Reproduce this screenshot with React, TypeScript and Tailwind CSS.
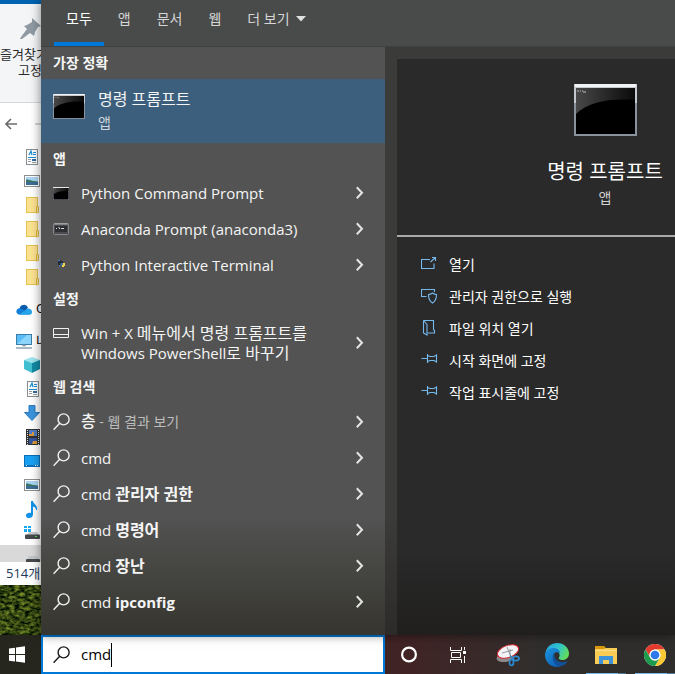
import React, { useState } from "react";

type Result = {
  label: React.ReactNode;
  icon: React.ReactNode;
  rowClass?: string;
};

const fontClass = "font-['Open_Sans','Noto_Sans_CJK_KR',sans-serif]";

/* ---------- search panel icons ---------- */

const SearchIcon = ({ color = "#f2f2f2" }: { color?: string }) => (
  <svg width="18" height="18" viewBox="0 0 18 18" fill="none" stroke={color} strokeWidth="1.4">
    <circle cx="10.6" cy="6.4" r="5.5" />
    <path d="M6.7 10.3 0.6 16.8" />
  </svg>
);

const Chevron = () => (
  <svg width="8" height="14" viewBox="0 0 8 14" fill="none" stroke="#e4e4e4" strokeWidth="2">
    <path d="M0.800 1.200 6 6.700 0.800 12.200" />
  </svg>
);

// black console window, used in three sizes
const ConsoleIcon = ({ width, height }: { width: number; height: number }) => (
  <svg width={width} height={height} viewBox="0 0 63 52" preserveAspectRatio="none">
    <defs>
      <linearGradient id="gloss" x1="0" x2="1">
        <stop offset="0" stopColor="#484848" />
        <stop offset="1" stopColor="#0a0a0a" />
      </linearGradient>
    </defs>
    <rect width="63" height="52" fill="#8a929e" />
    <rect width="63" height="19" fill="#c5c8cc" />
    <rect x="1" y="0" width="61" height="3" fill="#f1f3f4" />
    <rect x="2" y="4" width="59" height="46" fill="#000" />
    <path d="M2 4H61V16C36 14 14 18 2 30Z" fill="url(#gloss)" />
    <path d="M3 7h2M6 7h1M8 7h1M9 8h3" stroke="#bbb" strokeWidth="1.2" />
  </svg>
);

const AnacondaIcon = () => (
  <svg width="16" height="12" viewBox="0 0 16 12">
    <rect x="0.5" y="0.5" width="15" height="11" rx="1" fill="#4a4c50" stroke="#85878b" />
    <path d="M1 1h14" stroke="#b5b8bb" />
    <rect x="2" y="3" width="12" height="6" fill="#2d2f33" />
    <path d="M3 5.5h1M6 5.5h1M8 5.5h3M6 4v1" stroke="#d8d8d8" />
  </svg>
);

const PythonIcon = () => (
  <svg width="16" height="12" viewBox="0 0 16 12">
    <path d="M5 1h3v1h2v2H7v2H5z" fill="#222d38" />
    <path d="M5 1h2v1H5z" fill="#4b83b8" />
    <path d="M8 4h2v3H8zM6 6h1v2H6z" fill="#3672a5" />
    <path d="M10 4h2v3h-1v1H9V6h1z" fill="#f4cf4b" />
  </svg>
);

const TaskbarSettingIcon = () => (
  <svg width="16" height="10" viewBox="0 0 16 10" fill="none" stroke="#f2f2f2">
    <path d="M0.5 0.5h15v9H0.5zM0.5 6.5h15" />
  </svg>
);

/* ---------- action icons ---------- */

const OpenIcon = () => (
  <svg width="17" height="17" viewBox="1 0 17 17" fill="none" stroke="#76b9ed" strokeWidth="1.1">
    <path d="M10 4.5H1.500v9h12.500V8.500M10.500 7 15.500 2.500M12 2.500h3.500V6" />
  </svg>
);

const AdminIcon = () => (
  <svg width="17" height="17" viewBox="1 0 17 17" fill="none" stroke="#76b9ed" strokeWidth="1.1">
    <path d="M6.500 9.500h-5v-7h13V5" />
    <path d="M12.500 6c1.200 1 2.500 1.500 4 1.500 0 4-1 6.800-4 8.500-3-1.700-4-4.500-4-8.500 1.500 0 2.800-.5 4-1.500z" />
  </svg>
);

const LocationIcon = () => (
  <svg width="17" height="17" viewBox="1 0 17 17" fill="none" stroke="#76b9ed" strokeWidth="1.1">
    <path d="M3.500 1.500h10v9l1 1v2.500H7.500" />
    <path d="M3.500 1.500v12.500l3.500 2V5.500l-3.500-4" />
  </svg>
);

const PinIcon = () => (
  <svg width="17" height="17" viewBox="0 0 17 17" fill="none" stroke="#76b9ed" strokeWidth="1.1">
    <path d="M0.500 7.500h6M6.500 3v9M6.500 4.500 9 5.500h4l2.500-1.500v7L13 9.500H9l-2.500 1" />
  </svg>
);

/* ---------- explorer sidebar icons ---------- */

const DocIcon = () => (
  <svg width="13" height="16" viewBox="0 0 13 16">
    <rect x="0.5" y="0.5" width="11" height="15" fill="#fff" stroke="#8b8f92" />
    <path d="M3 6 5 2l1 4" stroke="#1e8fd6" strokeWidth="1.3" fill="none" />
    <path d="M7 3.500h3M7 5.500h3M2 8.500h8" stroke="#1e8fd6" />
    <path d="M2 10.500h3M2 12.500h3M6 13.500h4" stroke="#9aa0a4" />
    <rect x="6" y="10" width="4" height="2" fill="#356a9c" />
  </svg>
);

const PictureIcon = () => (
  <svg width="16" height="12" viewBox="0 0 16 12">
    <rect x="0.5" y="0.5" width="15" height="11" fill="#fff" stroke="#8b8f92" />
    <rect x="2" y="2" width="12" height="8" fill="#a9d6f3" />
    <path d="M2 4.500c3 0 6 1.500 12 2V8H2z" fill="#3f7567" />
    <rect x="2" y="7" width="12" height="3" fill="#3b6c96" />
  </svg>
);

const FolderIcon = () => (
  <svg width="13" height="17" viewBox="0 0 13 17">
    <rect x="0.5" y="0.5" width="11" height="15" fill="#fce391" stroke="#e6c250" />
    <path d="M10.500 16V9.500h2V15l-1 1z" fill="#fce391" stroke="#e0b840" />
  </svg>
);

const OneDriveIcon = () => (
  <svg className="shrink-0" width="16" height="11" viewBox="0 0 16 11">
    <path d="M3.500 4.500A4.500 4.500 0 0 1 12 3.500L9 8 2 9z" fill="#0a5cab" />
    <path d="M2.500 10.500A3.200 3.200 0 0 1 3 4.300c1.500-.3 3 .5 4.500 1.700L13 10.500z" fill="#1280d8" />
    <path d="M3 10.800 11.500 4.500c2.500-.2 4.500 1 4.500 3.400 0 1.700-1 2.900-3 2.900z" fill="#28a4ea" />
  </svg>
);

const PcIcon = () => (
  <svg className="shrink-0" width="16" height="15" viewBox="0 0 16 15">
    <rect x="0.5" y="0.5" width="15" height="10" fill="#58bdf6" stroke="#3b7da8" />
    <path d="M1 10 11 1h4v9z" fill="#8dd5fb" />
    <path d="M6 11.500h4M0 14h16" stroke="#8fa4b2" strokeWidth="1.5" />
  </svg>
);

const CubeIcon = () => (
  <svg width="16" height="16" viewBox="0 0 16 16">
    <path d="M0 3 8 0l8 3-8 3z" fill="#9be6ee" />
    <path d="M0 3l8 3v10L0 12z" fill="#42bfd0" />
    <path d="M16 3 8 6v10l8-4z" fill="#128ba5" />
  </svg>
);

const DownloadIcon = () => (
  <svg width="16" height="16" viewBox="0 0 16 16">
    <path d="M5 0.500h6v7h4.500L8 15.500.5 7.500H5z" fill="#3b94dc" stroke="#2b78bd" />
  </svg>
);

const VideoIcon = () => (
  <svg width="14" height="16" viewBox="0 0 14 16">
    <rect width="14" height="16" fill="#333" />
    <rect x="3" y="1" width="8" height="6" fill="#4f7bc4" />
    <rect x="3" y="9" width="8" height="6" fill="#35559c" />
    <path d="M3 5h3V3h2v4H3zM7 12h4v3H6z" fill="#d8983f" />
    <path d="M1.500 1v15M12.500 1v15" stroke="#ddd" strokeDasharray="1 1" />
  </svg>
);

const DesktopIcon = () => (
  <svg width="16" height="12" viewBox="0 0 16 12">
    <rect x="0.5" y="0.5" width="15" height="11" fill="#18a0f2" stroke="#0a6fb8" />
    <path d="M1 10.500h14" stroke="#0a6fb8" />
    <path d="M2 10.500h1M11 10.500h1M13 10.500h1" stroke="#fff" />
  </svg>
);

const MusicIcon = () => (
  <svg width="14" height="17" viewBox="0 0 14 17">
    <path d="M5 0h2c0 3 5 4 4 9h-1c0-2-1-3-3-3.500V13c0 3-2 4-4 4-3 0-4-3-2-4.500 1-.8 2.500-1 4-.5z" fill="#1292e8" />
  </svg>
);

const DriveIcon = () => (
  <svg width="16" height="14" viewBox="0 0 16 14">
    <path d="M0 0h3v2H0zM4 0h3v2H4zM0 3h3v3H0zM4 3h3v3H4z" fill="#19a9ee" />
    <path d="M5 6h8l2 3H3z" fill="#c9ccce" />
    <rect x="1" y="8.500" width="15" height="4.500" rx="1" fill="#45494b" />
    <rect x="11" y="10" width="2" height="1" fill="#5fd35f" />
  </svg>
);

const PlainDriveIcon = () => (
  <svg width="14" height="6" viewBox="0 0 14 6">
    <path d="M3 0h8l2 4H1z" fill="#c3c6c8" />
    <rect y="3" width="14" height="5" rx="1" fill="#45494b" />
  </svg>
);

const sidebarFiles = [
  <DocIcon />,
  <PictureIcon />,
  <FolderIcon />,
  <FolderIcon />,
  <FolderIcon />,
  <FolderIcon />,
];

const sidebarPc = [
  <CubeIcon />,
  <DocIcon />,
  <DownloadIcon />,
  <VideoIcon />,
  <DesktopIcon />,
  <PictureIcon />,
  <MusicIcon />,
  <DriveIcon />,
];

const Wallpaper = () => (
  <svg className="min-h-[50px] w-full flex-1" viewBox="0 0 41 50" preserveAspectRatio="none">
    <defs>
      <filter id="grass" x="0" y="0" width="100%" height="100%" colorInterpolationFilters="sRGB">
        <feTurbulence type="fractalNoise" baseFrequency="0.2 0.35" numOctaves="3" seed="4" />
        <feColorMatrix values="0.9 0 0 0 -0.24  0.9 0 0 0 -0.17  0.3 0 0 0 -0.08  0 0 0 0 1" />
      </filter>
    </defs>
    <rect width="41" height="50" filter="url(#grass)" />
  </svg>
);

const ExplorerStrip = () => (
  <div className="flex w-[41px] shrink-0 flex-col overflow-hidden whitespace-nowrap bg-white">
    <div className="h-1 bg-[#0063b1]" />
    <div className="h-[99px] border-b border-[#d5d7da] bg-[#f4f5f7] pt-[14px] text-[13px] leading-4 text-[#2b2b2b]">
      <svg className="ml-5" width="22" height="22" viewBox="0 0 22 22" fill="#8f9aa3">
        <path d="M12 0 21 8l-3 1-3 5-1 4-4-3-8 6-2-0 1-2 6-8-3-3 3-1 5-3z" />
      </svg>
      <p className="mt-1.5">즐겨찾기</p>
      <p className="ml-[18px]">고정</p>
    </div>
    <div className="flex h-[42px] items-center gap-[18px] pl-[5px]">
      <svg className="shrink-0" width="12" height="12" viewBox="0 0 12 12" fill="none" stroke="#6b6b6b" strokeWidth="1.6">
        <path d="M12 6H1M6 1 1 6l5 5" />
      </svg>
      <span className="h-0.5 w-3 shrink-0 bg-[#d4d4d4]" />
    </div>
    <ul>
      {sidebarFiles.map((icon, i) => (
        <li key={i} className={i === 1 ? "flex h-6 items-center pl-6" : "flex h-6 items-center pl-[26px]"}>
          {icon}
        </li>
      ))}
      <li className="mt-2 flex h-6 items-center gap-1 pl-4 text-[13px]">
        <OneDriveIcon />
        OneDrive
      </li>
      <li className="mt-2 flex h-6 items-center gap-1 pl-4 text-[13px]">
        <PcIcon />내 PC
      </li>
      {sidebarPc.map((icon, i) => (
        <li key={i} className="flex h-6 w-10 items-center justify-end">
          {icon}
        </li>
      ))}
      <li className="flex h-[17px] items-end bg-[#d9d9d9] pl-[26px]">
        <PlainDriveIcon />
      </li>
    </ul>
    <p className="h-[23px] pl-1.5 text-[13px] leading-[23px] text-[#1e395b]">514개</p>
    <Wallpaper />
  </div>
);

/* ---------- search panel ---------- */

const tabs = ["모두", "앱", "문서", "웹"];

const apps: Result[] = [
  { label: "Python Command Prompt", icon: <ConsoleIcon width={16} height={13} /> },
  { label: "Anaconda Prompt (anaconda3)", icon: <AnacondaIcon /> },
  { label: "Python Interactive Terminal", icon: <PythonIcon /> },
];

const settings: Result[] = [
  {
    label: (
      <>
        Win + X <span className="text-base leading-5">메뉴에서 명령 프롬프트를</span>
        <br />
        Windows PowerShell<span className="text-base leading-5">로 바꾸기</span>
      </>
    ),
    icon: (
      <span className="block pb-5">
        <TaskbarSettingIcon />
      </span>
    ),
    rowClass: "h-14",
  },
];

const webResults: Result[] = [
  {
    label: (
      <>
        <b className="text-base leading-5 font-medium">층</b>
        <span className="text-sm text-[#bdbdbd]"> - 웹 결과 보기</span>
      </>
    ),
    icon: <SearchIcon />,
    rowClass: "h-[37px]",
  },
  { label: "cmd", icon: <SearchIcon /> },
  ...["관리자 권한", "명령어", "장난"].map((word) => ({
    label: (
      <>
        cmd <b className="text-base leading-5">{word}</b>
      </>
    ),
    icon: <SearchIcon />,
  })),
  {
    label: (
      <>
        cmd <b>ipconfig</b>
      </>
    ),
    icon: <SearchIcon />,
  },
];

const actions = [
  { label: "열기", icon: <OpenIcon /> },
  { label: "관리자 권한으로 실행", icon: <AdminIcon /> },
  { label: "파일 위치 열기", icon: <LocationIcon /> },
  { label: "시작 화면에 고정", icon: <PinIcon /> },
  { label: "작업 표시줄에 고정", icon: <PinIcon /> },
];

const Section = ({ title, items }: { title: string; items: Result[] }) => (
  <section>
    <h2 className="flex h-8 items-center px-3 text-sm font-bold">{title}</h2>
    {items.map((item, index) => (
      <button
        key={index}
        className={`flex w-full items-center pl-3 pr-[21px] text-left text-[15px] leading-5 hover:bg-white/10 ${item.rowClass ?? "h-9"}`}
      >
        <span className="w-7 shrink-0">{item.icon}</span>
        <span className="flex-1 whitespace-nowrap">{item.label}</span>
        <Chevron />
      </button>
    ))}
  </section>
);

const ResultList = () => (
  <div className="w-[344px] shrink-0 bg-linear-to-b from-[#525352] from-80% to-[#36352f] text-[#f5f5f5]">
    <h2 className="flex h-8 items-center px-3 text-sm font-bold">가장 정확</h2>
    <button className="flex h-16 w-full bg-[#3b5f7c] px-3 text-left">
      <span className="mt-[15px] w-[45px] shrink-0">
        <ConsoleIcon width={32} height={25} />
      </span>
      <span className="mt-2 block">
        <span className="block text-base leading-6">명령 프롬프트</span>
        <span className="block text-sm leading-6 text-[#d0d8de]">앱</span>
      </span>
    </button>
    <Section title="앱" items={apps} />
    <Section title="설정" items={settings} />
    <Section title="웹 검색" items={webResults} />
  </div>
);

const Preview = () => (
  <div className="min-w-0 flex-1 overflow-hidden bg-linear-to-b from-[#3b3b3a] from-80% to-[#2d2b2a] pl-3 pt-3">
    <div className="h-full min-w-[416px] bg-linear-to-b from-[#2a2a2a] from-85% to-[#201f1e] text-white">
      <div className="flex h-[178px] flex-col items-center border-b-2 border-[#a9a9a9] pt-[25px]">
        <ConsoleIcon width={63} height={52} />
        <h1 className="mt-5 text-xl leading-8">명령 프롬프트</h1>
        <p className="text-sm leading-5 text-[#d2d2d2]">앱</p>
      </div>
      <ul className="pl-6 pt-3">
        {actions.map((action) => (
          <li key={action.label}>
            <button className="flex h-8 items-center gap-[11px] text-sm hover:underline">
              <span className="pb-1">{action.icon}</span>
              {action.label}
            </button>
          </li>
        ))}
      </ul>
    </div>
  </div>
);

/* ---------- taskbar ---------- */

const WindowsLogo = () => (
  <svg width="17" height="17" viewBox="0 0 17 17" fill="#fff">
    <path d="M1 2.500 7 1.700V8H1zM8 1.500 17 0.300V8H8zM1 9h6v6.500L1 14.700zM8 9h9v7.700L8 15.600z" />
  </svg>
);

const CortanaIcon = () => (
  <svg width="17" height="17" viewBox="0 0 17 17" fill="none" stroke="#fff" strokeWidth="2.2">
    <circle cx="8" cy="8.500" r="6.900" />
  </svg>
);

const TaskViewIcon = () => (
  <svg width="17" height="16" viewBox="0 0 17 16" fill="none" stroke="#fff">
    <path d="M0.500 0v3.500h11V0M0.500 16v-3.500h11V16M1.500 5.500h9v5h-9zM14.500 0v3M14.500 9v7" />
    <path d="M13 4h3v3h-3z" fill="#fff" stroke="none" />
  </svg>
);

const SnippingIcon = () => (
  <svg width="24" height="24" viewBox="0 0 24 24" fill="none">
    <ellipse cx="9" cy="14.500" rx="8.500" ry="4.500" transform="rotate(-8 9 14)" fill="#8d8a8b" />
    <ellipse cx="12" cy="8.500" rx="11" ry="6" transform="rotate(-20 12 8.500)" fill="#f5f5f7" stroke="#d2262d" />
    <path d="M6 10 17 7M11 4l4 10M14 6v6" stroke="#8a8f96" strokeWidth="0.9" />
    <path d="M14 12.500 17 16.500" stroke="#2c80bd" strokeWidth="1.5" />
    <ellipse cx="15.500" cy="19.500" rx="2" ry="3" stroke="#2c8ad0" strokeWidth="1.7" />
    <ellipse cx="20" cy="15.500" rx="3" ry="2.200" stroke="#2c8ad0" strokeWidth="1.7" />
  </svg>
);

const EdgeIcon = () => (
  <svg width="24" height="24" viewBox="0 0 24 24">
    <defs>
      <linearGradient id="edgeTop" x1="0" x2="1" y1="0.2" y2="0.6">
        <stop offset="0" stopColor="#2aa8e0" />
        <stop offset="0.5" stopColor="#30c5d0" />
        <stop offset="1" stopColor="#65dc55" />
      </linearGradient>
      <linearGradient id="edgeLow" x1="0" x2="0.7" y1="0" y2="1">
        <stop offset="0" stopColor="#1b96de" />
        <stop offset="1" stopColor="#0e62b8" />
      </linearGradient>
    </defs>
    <path d="M0.500 9.500C2 3.500 6.500 0 12 0c7 0 12 5 12 10.500 0 4-2.800 6.500-6.500 6.500-2.800 0-4.500-1.200-3.500-2.500 2-3-.5-7-5-7-4 0-7 1.500-8.500 2z" fill="url(#edgeTop)" />
    <path d="M0 12c0-4 3.800-7 8.500-7 4 0 6.500 2.500 6.500 5-4.500-2.500-8 1-7 5.500.8 4.500 4.500 7.500 8 7.800C7.500 26 0 20 0 12z" fill="url(#edgeLow)" />
    <path d="M9.500 10.500C6 14 8 24 16.500 23c3-.8 5.200-2.800 6.300-5-5 2.500-13.800 1.500-13.300-7.500z" fill="#11509a" />
  </svg>
);

const FileExplorerIcon = () => (
  <svg width="22" height="18" viewBox="0 0 22 18">
    <path d="M0 0h9l1.500 2H22v16H0z" fill="#f9cd55" />
    <path d="M0 0h9l1.500 2L9 3H0z" fill="#d9980f" />
    <path d="M0 4h22v1H0z" fill="#ffe08a" />
    <path d="M4 18v-8h14v8h-4v-4H8v4z" fill="#3c93dc" />
  </svg>
);

const ChromeIcon = () => (
  <svg width="22" height="22" viewBox="0 0 48 48">
    <circle cx="24" cy="24" r="24" fill="#fff" />
    <path d="M24 12h20.800A24 24 0 0 0 3.200 12l10.400 18A12 12 0 0 1 24 12z" fill="#e33b2e" />
    <path d="M34.400 30 24 48A24 24 0 0 0 44.800 12H24a12 12 0 0 1 10.400 18z" fill="#fcc934" />
    <path d="M13.600 30 3.200 12A24 24 0 0 0 24 48l10.400-18a12 12 0 0 1-20.800 0z" fill="#1e9b4c" />
    <circle cx="24" cy="24" r="12" fill="#fff" />
    <circle cx="24" cy="24" r="9.500" fill="#2f78ea" />
  </svg>
);

const taskbarApps = [
  { name: "Cortana", icon: <CortanaIcon />, open: false },
  { name: "Task View", icon: <TaskViewIcon />, open: false },
  { name: "Snipping Tool", icon: <SnippingIcon />, open: false },
  { name: "Edge", icon: <EdgeIcon />, open: false },
  { name: "File Explorer", icon: <FileExplorerIcon />, open: true },
  { name: "Chrome", icon: <ChromeIcon />, open: true },
];

const Taskbar = () => {
  const [query, setQuery] = useState("cmd");

  return (
    <footer className="flex h-[39px] shrink-0 overflow-hidden bg-linear-to-r from-[#26261f] from-5% via-[#412324] via-60% to-[#302e2d] to-80%">
      <button aria-label="Start" className="w-[41px] shrink-0 pl-2">
        <WindowsLogo />
      </button>
      <label className="flex w-[344px] shrink-0 items-center border-2 border-[#0078d7] bg-white pl-2.5 text-[15px] text-black">
        <span className="w-7 shrink-0">
          <SearchIcon color="#1a1a1a" />
        </span>
        <input
          aria-label="Search"
          className="field-sizing-content caret-transparent outline-none"
          value={query}
          onChange={(e) => setQuery(e.target.value)}
        />
        <span className="h-6 w-px bg-black" />
      </label>
      {taskbarApps.map((app) => (
        <button key={app.name} aria-label={app.name} className="relative flex w-[49px] shrink-0 items-center justify-center">
          {app.icon}
          {app.open && (
            <span className="absolute bottom-0 left-[5px] flex h-px w-10 bg-[#4f7896]">
              <span className="w-8 bg-[#76b9ed]" />
            </span>
          )}
        </button>
      ))}
    </footer>
  );
};

const App: React.FC = () => {
  return (
    <div className={`flex min-h-screen flex-col overflow-hidden bg-[#2b2b2b] ${fontClass}`}>
      <div className="flex flex-1">
        <ExplorerStrip />
        <main className="z-10 flex min-w-0 flex-1 flex-col shadow-[0_0_10px_rgba(0,0,0,0.5)]">
          <nav className="flex h-[47px] shrink-0 gap-0.5 border-b border-[#3f4040] bg-[#494a4a] pl-[13px] text-sm text-[#d6d6d6]">
            {tabs.map((tab, i) => (
              <button
                key={tab}
                className={
                  i === 0
                    ? "border-b-4 border-[#0078d7] px-3 pb-1 text-white"
                    : "border-b-4 border-transparent px-3 pb-1"
                }
              >
                {tab}
              </button>
            ))}
            <button className="flex items-center gap-1.5 border-b-4 border-transparent px-3 pb-1">
              더 보기
              <svg width="10" height="6" viewBox="0 0 10 6" fill="#e0e0e0">
                <path d="M0 0h10L5 5.500z" />
              </svg>
            </button>
          </nav>
          <div className="flex flex-1">
            <ResultList />
            <Preview />
          </div>
        </main>
      </div>
      <Taskbar />
    </div>
  );
};

export default App;
